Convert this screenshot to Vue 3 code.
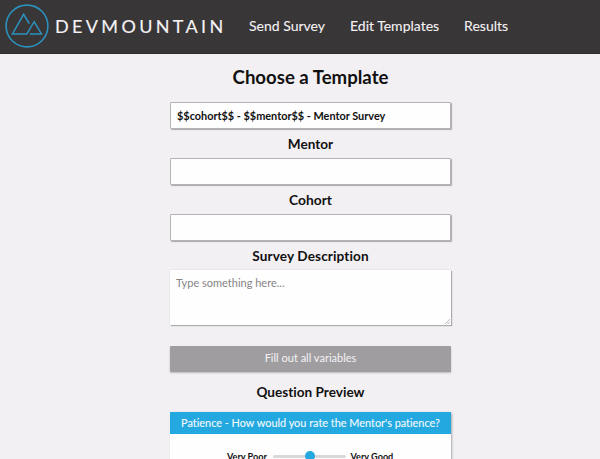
<script setup>
const links = ['Send Survey', 'Edit Templates', 'Results']
</script>

<template>
  <div class="page">
    <header class="bar">
      <svg class="logo" viewBox="0 0 44 44" fill="none" stroke="#2b91bd">
        <circle cx="22" cy="22" r="20.9" stroke-width="1.6" />
        <path d="M24.2 19.5 L18.6 10.3 L7.5 29.9 H21.8 L29.2 17.6 L36.4 29.9 H24.8" stroke-width="1.5" />
      </svg>
      <span class="brand">DEVMOUNTAIN</span>
      <nav class="nav">
        <a v-for="label in links" :key="label">{{ label }}</a>
      </nav>
    </header>
    <main class="form">
      <h1>Choose a Template</h1>
      <div class="field picker">$$cohort$$ - $$mentor$$ - Mentor Survey</div>
      <h2>Mentor</h2>
      <div class="field"></div>
      <h2 class="cohort">Cohort</h2>
      <div class="field"></div>
      <h2 class="desc">Survey Description</h2>
      <div class="area">
        Type something here...
        <svg class="grip" viewBox="0 0 6 6" stroke="#888" stroke-width=".7"><path d="M0 6 L6 0 M3 6 L6 3" /></svg>
      </div>
      <div class="button">Fill out all variables</div>
      <h2 class="preview">Question Preview</h2>
      <section class="card">
        <div class="question">Patience - How would you rate the Mentor's patience?</div>
        <div class="rating">
          <span class="poor">Very Poor</span>
          <div class="track"><i></i></div>
          <span class="good">Very Good</span>
        </div>
      </section>
    </main>
  </div>
</template>

<style>
body { margin: 0; background: #f2f0f3; }
</style>

<style scoped>
* { box-sizing: border-box; }
.page { height: 459px; overflow: hidden; background: #f2f0f3; font-family: Lato, "Open Sans", sans-serif; font-variant-ligatures: none; color: #111; white-space: nowrap; }
.bar { height: 54px; background: #393637; border-bottom: 1px solid #302d2e; display: flex; align-items: center; padding: 0 0 2px 5px; color: #f4f2f4; }
.logo { width: 44px; height: 44px; flex: none; }
.brand { font-size: 18px; letter-spacing: 3.35px; margin-left: 6px; width: 194px; line-height: 24px; -webkit-text-stroke: .15px currentColor; }
.nav { display: flex; gap: 25px; font-size: 14px; line-height: 20px; -webkit-text-stroke: .1px currentColor; }
h1, h2 { margin: 0; text-align: center; font-weight: 700; }
h1 { font-size: 18.6px; line-height: 24px; height: 24px; }
h2 { font-size: 13.6px; line-height: 20px; height: 29px; padding-top: 5px; }
.cohort { font-size: 13.8px; }
.desc { letter-spacing: .12px; }
.form { width: 281px; margin-left: 170px; padding-top: 11px; }
.field { height: 27px; background: #fefefe; border: 1px solid #b4b2b5; border-radius: 1px; box-shadow: 1px 1px 1px #aaa8ab; }
.picker { margin-top: 13px; padding-left: 6px; font-size: 10.9px; font-weight: 700; line-height: 25px; }
.area { position: relative; height: 55px; background: #fefefe; box-shadow: 0 0 1px #c5c3c6, 1px 1px 1px #aaa8ab; padding: 5px 6px; font-size: 11px; line-height: 16px; color: #858386; }
.grip { position: absolute; right: 1px; bottom: 1px; width: 5px; height: 5px; }
.button { margin-top: 21px; height: 26px; border-radius: 1px; background: #9f9da0; box-shadow: 0 1px 2px #b9b7ba; color: #f5f3f6; font-size: 11px; line-height: 24px; text-align: center; }
.preview { height: 40px; padding-top: 10px; }
.card { height: 80px; background: #fefefe; box-shadow: 1px 1px 2px #aaa8ab; }
.question { height: 22px; background: #24a8e0; color: #f3faff; font-size: 10.9px; line-height: 21px; text-align: center; -webkit-text-stroke: .1px currentColor; }
.rating { display: flex; align-items: center; height: 16px; margin-top: 14px; padding-left: 57px; font-size: 9.1px; font-weight: 700; }
.poor { width: 46px; }
.track { width: 73px; height: 3px; border-radius: 2px; background: #d9d8da; margin-right: 4.5px; display: flex; align-items: center; justify-content: center; }
.track i { width: 10px; height: 10px; border-radius: 50%; background: #24a8e0; flex: none; }
</style>
